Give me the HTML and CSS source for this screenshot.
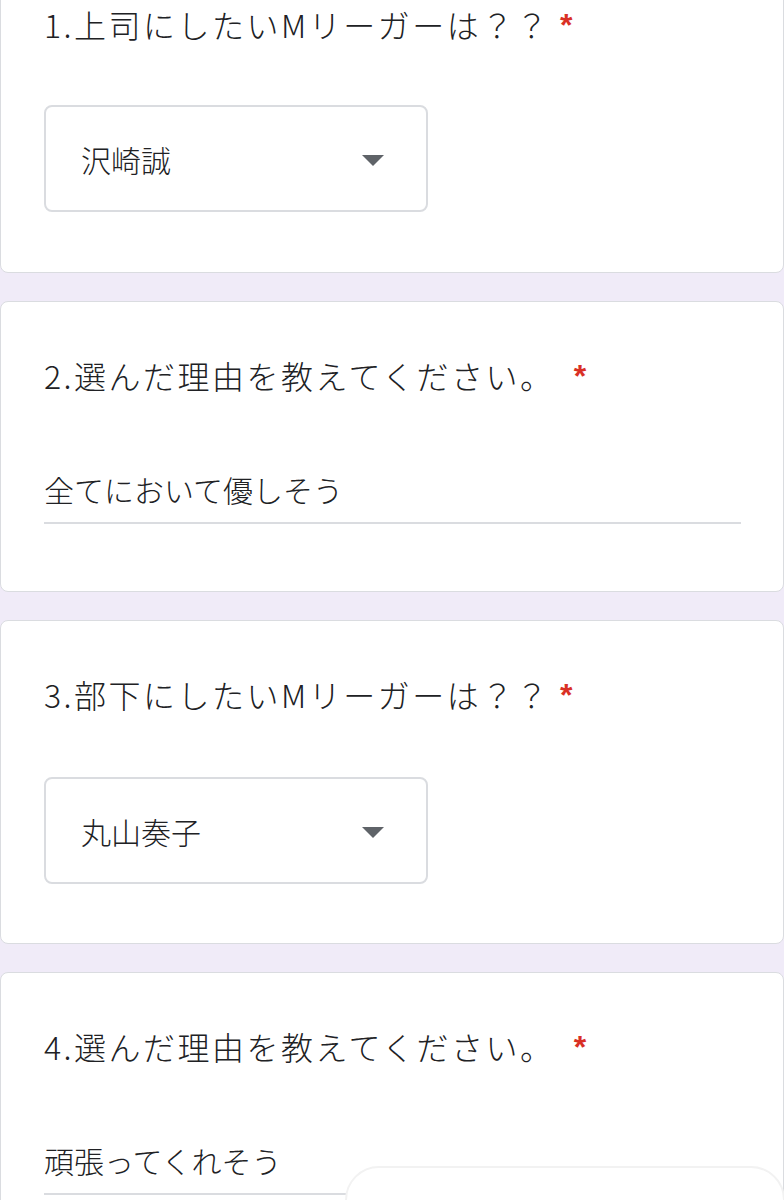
FILE: index.html
```html
<!DOCTYPE html>
<html lang="ja">
<head>
<meta charset="utf-8">
<title>Form</title>
<link rel="stylesheet" href="styles.css">
</head>
<body>
<div class="page">
  <section class="card card-first">
    <h2 class="q-title">1.上司にしたいMリーガーは？？<span class="req">*</span></h2>
    <div class="select">
      <span class="select-text">沢崎誠</span>
      <svg class="arrow" width="22" height="11" viewBox="0 0 22 11"><path d="M0 0 L22 0 L11 11 Z" fill="#5f6368"/></svg>
    </div>
  </section>
  <section class="card">
    <h2 class="q-title">2.選んだ理由を教えてください。 <span class="req">*</span></h2>
    <div class="answer">全てにおいて優しそう</div>
  </section>
  <section class="card card-third">
    <h2 class="q-title">3.部下にしたいMリーガーは？？<span class="req">*</span></h2>
    <div class="select">
      <span class="select-text">丸山奏子</span>
      <svg class="arrow" width="22" height="11" viewBox="0 0 22 11"><path d="M0 0 L22 0 L11 11 Z" fill="#5f6368"/></svg>
    </div>
  </section>
  <section class="card">
    <h2 class="q-title">4.選んだ理由を教えてください。 <span class="req">*</span></h2>
    <div class="answer">頑張ってくれそう</div>
  </section>
</div>
<div class="sheet"></div>
</body>
</html>
```
FILE: styles.css
```css
html, body {
  margin: 0;
  padding: 0;
}
body {
  background: #f0ebf8;
  height: 1200px;
  overflow: hidden;
  position: relative;
  font-family: "Noto Sans CJK JP", "Noto Sans", sans-serif;
  font-weight: 300;
  color: #202124;
}
.page {
  margin-top: -50px;
  display: flex;
  flex-direction: column;
  gap: 28px;
}
.card {
  background: #fff;
  border: 1px solid #dadce0;
  border-radius: 8px;
  padding: 49px 44px 67px 43px;
}
.card-first {
  padding-bottom: 60px;
}
.card-third {
  padding-bottom: 59px;
}
.q-title {
  margin: 0;
  font-size: 32px;
  line-height: 48px;
  font-weight: 300;
  letter-spacing: 2.5px;
}
.req {
  color: #d93025;
  padding-left: 0.3em;
  font-family: "Liberation Sans", sans-serif;
  font-weight: 700;
  font-size: 32px;
  line-height: 0;
  vertical-align: 2px;
}
.select {
  margin-top: 57px;
  height: 103px;
  width: 303px;
  border: 2px solid #dadce0;
  border-radius: 8px;
  display: flex;
  align-items: center;
  justify-content: space-between;
  padding: 0 42px 0 35px;
  box-sizing: content-box;
}
.card-third .select {
  margin-top: 59px;
}
.select-text {
  font-size: 30px;
  line-height: 44px;
}
.arrow {
  display: block;
  margin-top: 4px;
}
.answer {
  margin-top: 68px;
  width: 697px;
  font-size: 30px;
  line-height: 44px;
  padding-bottom: 11px;
  border-bottom: 2px solid #dadce0;
}
.sheet {
  position: absolute;
  left: 345px;
  top: 1166px;
  width: 436px;
  height: 120px;
  background: #fff;
  border: 2px solid #f2f2f2;
  border-radius: 34px;
}
```
